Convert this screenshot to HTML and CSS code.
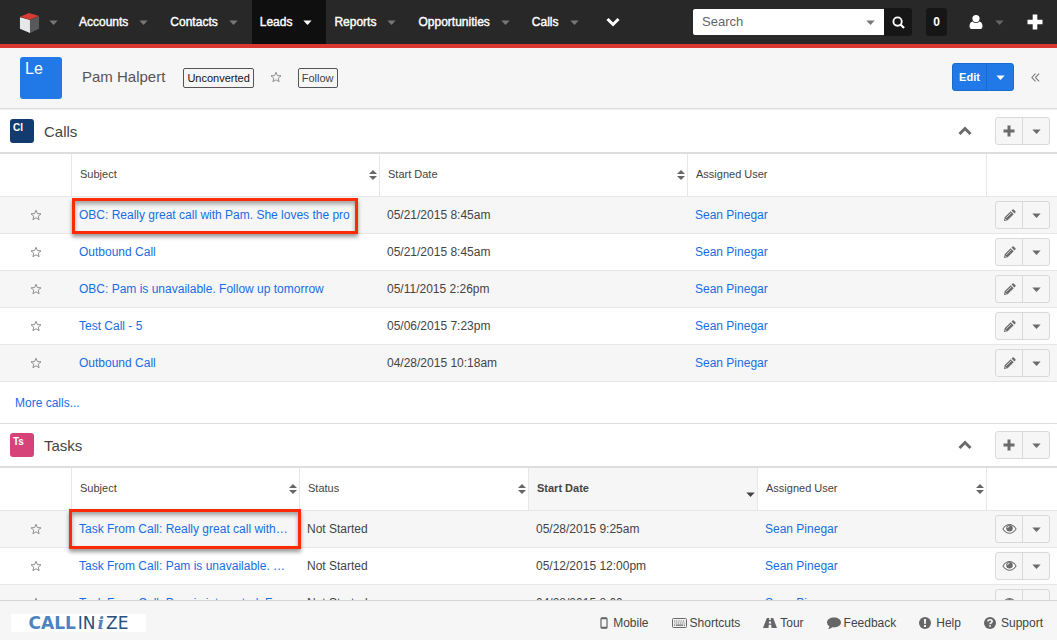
FILE: index.html
```html
<!DOCTYPE html>
<html lang="en">
<head>
<meta charset="utf-8">
<title>Pam Halpert - Leads</title>
<link rel="stylesheet" href="styles.css">
</head>
<body>
<svg class="sprite" aria-hidden="true">
  <symbol id="caret" viewBox="0 0 10 6"><path d="M0 .5h10L5 6z" fill="currentColor"/></symbol>
  <symbol id="star" viewBox="0 0 24 24"><path d="M12 2.500l2.800 6.600 7.200.6-5.500 4.700 1.700 7-6.200-3.800-6.200 3.800 1.700-7L2 9.700l7.200-.6z" fill="none" stroke="currentColor" stroke-width="1.900"/></symbol>
  <symbol id="plus" viewBox="0 0 12 12"><path d="M4.500.5h3v4h4v3h-4v4h-3v-4h-4v-3h4z" fill="currentColor"/></symbol>
  <symbol id="chevron-up" viewBox="0 0 14 10"><path d="M1.500 8L7 2.500 12.500 8" fill="none" stroke="currentColor" stroke-width="3"/></symbol>
  <symbol id="sort" viewBox="0 0 10 12"><path d="M1 5L5 1l4 4zM1 7L5 11l4-4z" fill="currentColor"/></symbol>
  <symbol id="pencil" viewBox="0 0 14 14"><path d="M1 13l.8-4L8.300 2.500l3.200 3.200L5 12.200zM9.200 1.600L10.300.6q.8-.6 1.500.1l1.600 1.600q.6.8-.1 1.500l-1 1z" fill="currentColor"/><path d="M3.500 9.500L9 4M2 10.300l1.800 1.800" stroke="#f6f6f6" stroke-width=".8"/></symbol>
  <symbol id="eye" viewBox="0 0 16 12"><path d="M1 6q3-4.700 7-4.700T15 6q-3 4.500-7 4.500T1 6z" fill="#fff" stroke="currentColor" stroke-width="1.100"/><circle cx="8" cy="5.200" r="3.500" fill="currentColor"/><path d="M6 5q0-2 2-2" fill="none" stroke="#fff" stroke-width=".9"/></symbol>
</svg>

<header class="topbar">
  <nav class="nav" aria-label="Modules">
    <a class="nav-item nav-home" href="#" aria-label="Home">
      <svg class="cube" viewBox="0 0 22 22"><path d="M1 5.500L11.500 8.500V22L1 17.500z" fill="#e6e7e8"/><path d="M11.500 8.500L21 4.500V17.500L11.500 22z" fill="#58595b"/><path d="M1 5L10.500 1 21 4.200 11.500 8z" fill="#d83a35"/></svg>
      <svg class="caret"><use href="#caret"/></svg></a>
    <a class="nav-item" href="#">Accounts<svg class="caret"><use href="#caret"/></svg></a>
    <a class="nav-item" href="#">Contacts<svg class="caret"><use href="#caret"/></svg></a>
    <a class="nav-item active" href="#">Leads<svg class="caret"><use href="#caret"/></svg></a>
    <a class="nav-item" href="#">Reports<svg class="caret"><use href="#caret"/></svg></a>
    <a class="nav-item" href="#">Opportunities<svg class="caret"><use href="#caret"/></svg></a>
    <a class="nav-item" href="#">Calls<svg class="caret"><use href="#caret"/></svg></a>
    <button class="nav-more" aria-label="More modules"><svg viewBox="0 0 14 10"><path d="M1.500 2L7 7.500 12.500 2" fill="none" stroke="#fff" stroke-width="3"/></svg></button>
  </nav>
  <div class="tools">
    <form class="search">
      <div class="search-box">
        <input type="text" placeholder="Search" aria-label="Search">
        <button type="button" class="search-scope" aria-label="Search in"><svg class="caret"><use href="#caret"/></svg></button>
      </div>
      <button type="button" class="search-go" aria-label="Run search"><svg viewBox="0 0 14 14"><circle cx="6" cy="6" r="4.500" fill="none" stroke="#fff" stroke-width="2"/><path d="M9.200 9.200L13 13" stroke="#fff" stroke-width="2.400"/></svg></button>
    </form>
    <button class="count">0</button>
    <button class="profile" aria-label="Profile"><svg class="person" viewBox="0 0 14 14"><circle cx="7" cy="3.600" r="3.600" fill="#fff"/><path d="M3.300 6.500Q7 9.500 10.700 6.500 13.500 7.500 13.500 11.500 13.500 14 11.300 14H2.700Q.5 14 .5 11.500.5 7.500 3.300 6.500z" fill="#fff"/></svg><svg class="caret"><use href="#caret"/></svg></button>
    <button class="quick-add" aria-label="Quick create"><svg viewBox="0 0 16 16"><path d="M5.700.5h4.600v5.200h5.200v4.600h-5.200v5.200H5.700v-5.200H.5V5.700h5.200z" fill="#fff"/></svg></button>
  </div>
</header>

<section class="record">
  <span class="badge-lg">Le</span>
  <h1>Pam Halpert</h1>
  <button class="tag dark">Unconverted</button>
  <button class="star" aria-label="Favorite"><svg><use href="#star"/></svg></button>
  <button class="tag">Follow</button>
  <div class="record-actions">
    <div class="split primary"><button>Edit</button><button aria-label="More actions"><svg class="caret"><use href="#caret"/></svg></button></div>
    <button class="collapse" aria-label="Collapse sidebar"><svg viewBox="0 0 10 10"><path d="M5 .8L1 5l4 4.200M9 .8L5 5l4 4.200" fill="none" stroke="currentColor" stroke-width="1.200"/></svg></button>
  </div>
</section>

<main class="content">
  <section class="panel">
    <div class="panel-head">
      <span class="badge calls">Cl</span><h2>Calls</h2>
      <button class="toggle" aria-label="Collapse calls"><svg><use href="#chevron-up"/></svg></button>
      <div class="split"><button aria-label="Add call"><svg class="plus"><use href="#plus"/></svg></button><button aria-label="Call options"><svg class="caret"><use href="#caret"/></svg></button></div>
    </div>
    <table>
      <colgroup><col class="col-star"><col><col><col class="col-user"><col class="col-act"></colgroup>
      <thead><tr><th></th>
        <th><div class="th">Subject<svg class="sort"><use href="#sort"/></svg></div></th>
        <th><div class="th">Start Date<svg class="sort"><use href="#sort"/></svg></div></th>
        <th><div class="th">Assigned User</div></th><th></th></tr></thead>
      <tbody>
        <tr><td class="c-star"><button class="star" aria-label="Favorite"><svg><use href="#star"/></svg></button></td><td class="marked"><a href="#">OBC: Really great call with Pam. She loves the pro</a><span class="mark mark-call"></span></td><td>05/21/2015 8:45am</td><td><a href="#">Sean Pinegar</a></td><td class="c-act"><div class="split"><button aria-label="Edit"><svg class="pencil"><use href="#pencil"/></svg></button><button aria-label="More"><svg class="caret"><use href="#caret"/></svg></button></div></td></tr>
        <tr><td class="c-star"><button class="star" aria-label="Favorite"><svg><use href="#star"/></svg></button></td><td><a href="#">Outbound Call</a></td><td>05/21/2015 8:45am</td><td><a href="#">Sean Pinegar</a></td><td class="c-act"><div class="split"><button aria-label="Edit"><svg class="pencil"><use href="#pencil"/></svg></button><button aria-label="More"><svg class="caret"><use href="#caret"/></svg></button></div></td></tr>
        <tr><td class="c-star"><button class="star" aria-label="Favorite"><svg><use href="#star"/></svg></button></td><td><a href="#">OBC: Pam is unavailable. Follow up tomorrow</a></td><td>05/11/2015 2:26pm</td><td><a href="#">Sean Pinegar</a></td><td class="c-act"><div class="split"><button aria-label="Edit"><svg class="pencil"><use href="#pencil"/></svg></button><button aria-label="More"><svg class="caret"><use href="#caret"/></svg></button></div></td></tr>
        <tr><td class="c-star"><button class="star" aria-label="Favorite"><svg><use href="#star"/></svg></button></td><td><a href="#">Test Call - 5</a></td><td>05/06/2015 7:23pm</td><td><a href="#">Sean Pinegar</a></td><td class="c-act"><div class="split"><button aria-label="Edit"><svg class="pencil"><use href="#pencil"/></svg></button><button aria-label="More"><svg class="caret"><use href="#caret"/></svg></button></div></td></tr>
        <tr><td class="c-star"><button class="star" aria-label="Favorite"><svg><use href="#star"/></svg></button></td><td><a href="#">Outbound Call</a></td><td>04/28/2015 10:18am</td><td><a href="#">Sean Pinegar</a></td><td class="c-act"><div class="split"><button aria-label="Edit"><svg class="pencil"><use href="#pencil"/></svg></button><button aria-label="More"><svg class="caret"><use href="#caret"/></svg></button></div></td></tr>
      </tbody>
    </table>
    <a class="more" href="#">More calls...</a>
  </section>

  <section class="panel">
    <div class="panel-head">
      <span class="badge tasks">Ts</span><h2>Tasks</h2>
      <button class="toggle" aria-label="Collapse tasks"><svg><use href="#chevron-up"/></svg></button>
      <div class="split"><button aria-label="Add task"><svg class="plus"><use href="#plus"/></svg></button><button aria-label="Task options"><svg class="caret"><use href="#caret"/></svg></button></div>
    </div>
    <table>
      <colgroup><col class="col-star"><col class="col-subject"><col><col><col><col class="col-act"></colgroup>
      <thead><tr><th></th>
        <th><div class="th">Subject<svg class="sort"><use href="#sort"/></svg></div></th>
        <th><div class="th">Status<svg class="sort"><use href="#sort"/></svg></div></th>
        <th class="sorted"><div class="th">Start Date<svg class="sort-down"><use href="#caret"/></svg></div></th>
        <th><div class="th">Assigned User<svg class="sort"><use href="#sort"/></svg></div></th><th></th></tr></thead>
      <tbody>
        <tr><td class="c-star"><button class="star" aria-label="Favorite"><svg><use href="#star"/></svg></button></td><td class="marked"><div class="clip"><a href="#">Task From Call: Really great call with…</a></div><span class="mark mark-task"></span></td><td>Not Started</td><td>05/28/2015 9:25am</td><td><a href="#">Sean Pinegar</a></td><td class="c-act"><div class="split"><button aria-label="Preview"><svg class="eye"><use href="#eye"/></svg></button><button aria-label="More"><svg class="caret"><use href="#caret"/></svg></button></div></td></tr>
        <tr><td class="c-star"><button class="star" aria-label="Favorite"><svg><use href="#star"/></svg></button></td><td><div class="clip"><a href="#">Task From Call: Pam is unavailable. …</a></div></td><td>Not Started</td><td>05/12/2015 12:00pm</td><td><a href="#">Sean Pinegar</a></td><td class="c-act"><div class="split"><button aria-label="Preview"><svg class="eye"><use href="#eye"/></svg></button><button aria-label="More"><svg class="caret"><use href="#caret"/></svg></button></div></td></tr>
        <tr><td class="c-star"><button class="star" aria-label="Favorite"><svg><use href="#star"/></svg></button></td><td><div class="clip"><a href="#">Task From Call: Pam is interested. F…</a></div></td><td>Not Started</td><td>04/28/2015 8:00am</td><td><a href="#">Sean Pinegar</a></td><td class="c-act"><div class="split"><button aria-label="Preview"><svg class="eye"><use href="#eye"/></svg></button><button aria-label="More"><svg class="caret"><use href="#caret"/></svg></button></div></td></tr>
      </tbody>
    </table>
  </section>
</main>

<footer class="footer">
  <div class="logo"><b>CALL</b><span>IN</span><i>i</i><span>ZE</span></div>
  <nav class="footer-links" aria-label="Footer">
    <a href="#"><svg class="i-mobile" viewBox="0 0 8 12"><rect x="1" y=".8" width="6" height="10.400" rx="1" fill="none" stroke="currentColor" stroke-width="1.200"/><path d="M1 1.500h6M1 10.500h6" stroke="currentColor" stroke-width="1.500"/></svg>Mobile</a>
    <a href="#"><svg class="i-key" viewBox="0 0 15 10"><rect x=".5" y=".5" width="14" height="9" rx="1" fill="none" stroke="currentColor"/><path d="M2 3h11" stroke="currentColor" stroke-width="1.200" stroke-dasharray="1 .8"/><path d="M2.500 5h11" stroke="currentColor" stroke-width="1.200" stroke-dasharray="1 .8"/><path d="M2 7.200h1.200M4 7.200h7M11.800 7.200H13" stroke="currentColor" stroke-width="1.200"/></svg>Shortcuts</a>
    <a href="#"><svg class="i-road" viewBox="0 0 14 11"><path d="M3.800 1h2.500l-.2 2h1.800l-.2-2h2.500L14 11H8.500l-.3-3.200H5.800L5.500 11H0zM6 4.500l-.2 2h2.400L8 4.500z" fill="currentColor" fill-rule="evenodd"/></svg>Tour</a>
    <a href="#"><svg class="i-chat" viewBox="0 0 14 12"><path d="M7 .5c3.800 0 7 2.100 7 4.900s-3.200 4.900-7 4.900q-.8 0-1.600-.1Q3.500 11.800 1 12q1.200-1.200 1.400-2.800Q0 7.700 0 5.400C0 2.600 3.200.5 7 .5z" fill="currentColor"/></svg>Feedback</a>
    <a href="#"><svg class="i-round" viewBox="0 0 12 12"><circle cx="6" cy="6" r="6" fill="currentColor"/><path d="M4.900 2h2.200l-.3 5H5.200zM5 8h2v2H5z" fill="#f6f6f6"/></svg>Help</a>
    <a href="#"><svg class="i-round" viewBox="0 0 12 12"><circle cx="6" cy="6" r="6" fill="currentColor"/><path d="M3.900 4.500Q4 2.800 6 2.800T8.100 4.400Q8 5.400 6.900 5.900 6 6.300 6 7.300" fill="none" stroke="#f6f6f6" stroke-width="1.600"/><path d="M5.100 8.200h1.800v1.600H5.100z" fill="#f6f6f6"/></svg>Support</a>
  </nav>
</footer>
</body>
</html>
```
FILE: styles.css
```css
* { box-sizing: border-box; }
body {
  margin: 0;
  height: 100vh;
  display: flex;
  flex-direction: column;
  overflow: hidden;
  background: #fff;
  color: #444;
  font: 12px/18px "Liberation Sans", Arial, sans-serif;
}
a { color: #176de5; text-decoration: none; }
button {
  margin: 0;
  padding: 0;
  border: 0;
  background: none;
  color: inherit;
  font: inherit;
  cursor: pointer;
}
svg { display: block; flex: none; }
.sprite { position: absolute; width: 0; height: 0; }
.caret { width: 9px; height: 5px; }

/* Top bar */
.topbar {
  flex: none;
  display: flex;
  justify-content: space-between;
  height: 48px;
  background: #282828;
  border-bottom: 4px solid #d9372f;
}
.nav { display: flex; align-items: stretch; }
.nav-item {
  display: flex;
  align-items: center;
  gap: 11px;
  padding: 0 14px 0 8px;
  color: #fff;
  -webkit-text-stroke: 0.4px #fff;
}
.nav-item .caret { color: #777; }
.nav-item.active { background: #0f0f0f; }
.nav-item.active .caret { color: #fff; }
.nav-home { padding: 0 13px 0 19px; gap: 9px; }
.cube { width: 21px; height: 21px; }
.nav-more { padding: 0 10px 0 13px; }
.nav-more svg { width: 14px; height: 10px; }
.tools { display: flex; align-items: center; padding-right: 14px; }
.search { display: flex; height: 28px; align-items: center; }
.search-box {
  display: flex;
  height: 26px;
  width: 191px;
  background: #fff;
  border-radius: 2px 0 0 2px;
}
.search-box input {
  flex: 1;
  min-width: 0;
  padding: 0 0 0 9px;
  border: 0;
  background: none;
  font: 13px/18px "Liberation Sans", Arial, sans-serif;
}
.search-box input::placeholder { color: #666; opacity: 1; }
.search-scope { padding: 0 9px; color: #777; }
.search-go {
  display: grid;
  place-items: center;
  width: 28px;
  height: 28px;
  background: #161616;
  border-radius: 0 3px 3px 0;
}
.search-go svg { width: 13px; height: 13px; }
.count {
  width: 21px;
  height: 28px;
  margin-left: 14px;
  background: #161616;
  border-radius: 3px;
  color: #fff;
  font-weight: bold;
}
.profile { display: flex; align-items: center; gap: 12px; margin-left: 22px; color: #666; }
.person { width: 14px; height: 14px; }
.quick-add { margin-left: 23px; }
.quick-add svg { width: 16px; height: 16px; }

/* Record header */
.record {
  flex: none;
  display: flex;
  align-items: center;
  height: 61px;
  padding: 0 17px 2px 20px;
  background: #f6f6f6;
  border-bottom: 1px solid #ddd;
}
.badge-lg {
  width: 42px;
  height: 42px;
  margin-top: 2px;
  padding: 3px 5px;
  border-radius: 3px;
  background: #2079e6;
  color: #fff;
  font-size: 16px;
}
.record h1 { margin: 0 18px 0 20px; font-size: 15px; font-weight: normal; color: #555; }
.tag {
  height: 20px;
  margin-top: 2px;
  padding: 0 3px;
  border: 1px solid #555;
  border-radius: 2px;
  font-size: 11px;
  line-height: 18px;
}
.tag.dark { color: #111; }
.star { color: #888; }
.star svg { width: 12px; height: 12px; }
.record .star { margin: 0 16px; }
.record-actions { display: flex; align-items: center; gap: 17px; margin-left: auto; }
.collapse { color: #777; }
.collapse svg { width: 9px; height: 9px; }

/* Split buttons */
.split {
  display: inline-flex;
  height: 28px;
  border: 1px solid #d9d9d9;
  border-radius: 3px;
  background: #f6f6f6;
  color: #6b6b6b;
}
.split button { display: grid; place-items: center; width: 26px; }
.split button + button { width: 27px; border-left: 1px solid #d9d9d9; }
.split.primary {
  background: #2079e6;
  border-color: #1a6bd0;
  color: #fff;
  font-size: 11px;
  font-weight: bold;
}
.split.primary button { width: 33px; }
.split.primary button + button { width: 27px; border-color: #1a6bd0; }
.plus { width: 12px; height: 12px; }
.pencil { width: 13px; height: 13px; }
.eye { width: 15px; height: 12px; }

/* Panels */
.content { flex: 1; min-height: 0; overflow: hidden; }
.panel { border-top: 1px solid #ddd; }
.panel:first-child { border-top-color: #f0f0f0; }
.panel-head {
  display: flex;
  align-items: center;
  height: 44px;
  padding: 0 7px 0 10px;
  border-bottom: 2px solid #ddd;
}
.badge {
  width: 24px;
  height: 24px;
  padding: 0 3px;
  border-radius: 3px;
  color: #fff;
  font-size: 10px;
  font-weight: bold;
}
.badge.calls { background: #123b70; }
.badge.tasks { background: #d64378; }
.panel-head h2 { margin: 2px auto 0 10px; font-size: 15px; font-weight: normal; color: #444; }
.toggle { margin-right: 23px; color: #6b6b6b; }
.toggle svg { width: 14px; height: 10px; }

table { width: 100%; border-collapse: separate; border-spacing: 0; table-layout: fixed; }
.col-star, .col-act { width: 71px; }
.col-user { width: 299px; }
.col-subject { width: 228px; }
th {
  height: 43px;
  padding: 0 0 2px;
  border-bottom: 1px solid #e6e6e6;
  border-left: 1px solid #e6e6e6;
  text-align: left;
  font-size: 11px;
  font-weight: normal;
}
th:first-child { border-left: 0; }
.th { display: flex; align-items: center; justify-content: space-between; padding: 0 1px 0 8px; }
.sort { width: 10px; height: 12px; margin-top: 2px; color: #666; }
.sort-down { width: 9px; height: 5px; margin-right: 1px; align-self: flex-end; }
th.sorted { background: #f6f6f6; font-weight: bold; }
td {
  height: 37px;
  padding: 0 8px;
  border-bottom: 1px solid #e6e6e6;
  white-space: nowrap;
}
tbody tr:nth-child(odd) { background: #f6f6f6; }
.c-star { padding: 0; }
.c-star .star { display: block; margin: 0 auto; }
.c-act { padding: 0 7px 0 0; text-align: right; }
.c-act .split { vertical-align: middle; }
.clip { overflow: hidden; text-overflow: ellipsis; }
.marked { position: relative; }
.mark {
  position: absolute;
  border: 3px solid #fb2b06;
  box-shadow: 0 3px 4px rgba(0, 0, 0, 0.4), inset 0 3px 4px rgba(0, 0, 0, 0.35);
  pointer-events: none;
}
.mark-call { inset: 1px 21px -1px 1px; }
.mark-task { inset: -2px -2px -2px -2px; }
.more { display: block; padding: 12px 15px 11px; }

/* Footer */
.footer {
  flex: none;
  display: flex;
  align-items: center;
  justify-content: space-between;
  height: 40px;
  padding: 4px 14px 0 11px;
  background: #f6f6f6;
  border-top: 1px solid #d5d5d5;
}
.logo {
  display: flex;
  justify-content: center;
  gap: 2px;
  width: 135px;
  height: 18px;
  background: #fff;
  color: #27507f;
  font: 17px/18px "DejaVu Sans", sans-serif;
}
.logo b { color: #4b84c0; }
.logo i { color: #4b84c0; font-weight: bold; font-family: "DejaVu Serif", serif; }
.footer-links { display: flex; gap: 23px; }
.footer-links a { display: flex; align-items: center; gap: 3px; color: #444; }
.footer-links svg { color: #666; }
.i-mobile { width: 8px; height: 12px; margin-right: 2px; }
.i-key { width: 15px; height: 10px; }
.i-road { width: 14px; height: 11px; }
.i-chat { width: 14px; height: 12px; }
.i-round { width: 12px; height: 12px; margin-right: 2px; }
```
